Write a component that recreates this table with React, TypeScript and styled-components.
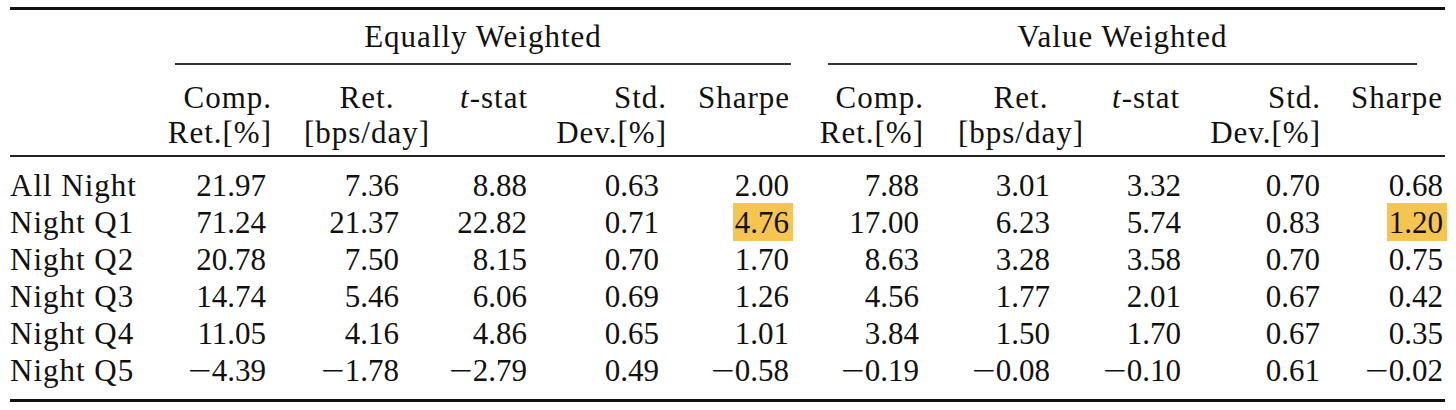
import styled, { createGlobalStyle } from 'styled-components'

const serif = '"Liberation Serif", serif'

const GlobalStyle = createGlobalStyle`
  html, body {
    margin: 0;
    padding: 0;
    background: #fff;
    font-family: ${serif};
    color: #111;
  }
`

const Table = styled.table`
  margin: 7px 0 0 10px;
  width: 1435px;
  table-layout: fixed;
  border-collapse: separate;
  border-spacing: 0;
  border-top: 3px solid #111;
  font-family: ${serif};
  font-size: 31px;
  color: #111;

  th,
  td {
    font-family: ${serif};
  }
`

const Col = styled.col<{ $w: number }>`
  width: ${(p) => p.$w}px;
`

const GroupCell = styled.th`
  padding: 8px 0 0 0;
  font-weight: normal;
  line-height: 37px;
  letter-spacing: 1px;
`

const CMid = styled.div<{ $left: number; $right: number }>`
  display: flex;
  justify-content: center;
  margin: 0 ${(p) => p.$right}px 0 ${(p) => p.$left}px;
  padding-bottom: 8px;
  border-bottom: 2px solid #333;
  white-space: nowrap;
`

const HeadCell = styled.th<{ $last?: boolean }>`
  padding: 15px ${(p) => (p.$last ? 2 : 0)}px 5px 0;
  font-weight: normal;
  line-height: 35px;
  vertical-align: top;
  border-bottom: 2px solid #222;
  letter-spacing: 1px;
`

const HeadStack = styled.div<{ $align: string; $shift: number }>`
  display: flex;
  flex-direction: column;
  align-items: ${(p) => p.$align};
  margin: 0 ${(p) => -p.$shift}px 0 ${(p) => p.$shift}px;
  white-space: nowrap;
`

const Row = styled.tr`
  &:first-child td {
    padding-top: 10px;
  }
  &:last-child td {
    padding-bottom: 10px;
    border-bottom: 3px solid #111;
  }
`

const LabelCell = styled.td`
  padding: 0;
  line-height: 37px;
  text-align: left;
  white-space: nowrap;
  letter-spacing: 1px;
`

const NumCell = styled.td<{ $last?: boolean }>`
  padding: 0 ${(p) => (p.$last ? 2 : 0)}px 0 0;
  line-height: 37px;
  text-align: right;
  white-space: nowrap;
`

const Highlight = styled.span`
  background: #f6c451;
  padding: 2px 4px 1px 2px;
  margin-right: -4px;
`

const Minus = styled.span`
  display: inline-block;
  transform: scaleX(1.35);
  transform-origin: right center;
  margin-left: 0.2em;
`

type Head = { lines: React.ReactNode[]; align: string; shift: number }

const tStat = (
  <span>
    <i>t</i>-stat
  </span>
)

const heads: Head[] = [
  { lines: ['Comp.', 'Ret.[%]'], align: 'flex-end', shift: 6 },
  { lines: ['Ret.', '[bps/day]'], align: 'center', shift: 34.5 },
  { lines: [tStat], align: 'flex-end', shift: 1 },
  { lines: ['Std.', 'Dev.[%]'], align: 'flex-end', shift: 8 },
  { lines: ['Sharpe'], align: 'flex-end', shift: 1 },
  { lines: ['Comp.', 'Ret.[%]'], align: 'flex-end', shift: 5 },
  { lines: ['Ret.', '[bps/day]'], align: 'center', shift: 36.5 },
  { lines: [tStat], align: 'flex-end', shift: -1 },
  { lines: ['Std.', 'Dev.[%]'], align: 'flex-end', shift: 1 },
  { lines: ['Sharpe'], align: 'flex-end', shift: 0 },
]

const widths = [165, 91, 133, 128, 132, 130, 130, 131, 131, 139, 125]

const rows: { label: string; values: string[] }[] = [
  { label: 'All Night', values: ['21.97', '7.36', '8.88', '0.63', '2.00', '7.88', '3.01', '3.32', '0.70', '0.68'] },
  { label: 'Night Q1', values: ['71.24', '21.37', '22.82', '0.71', '*4.76', '17.00', '6.23', '5.74', '0.83', '*1.20'] },
  { label: 'Night Q2', values: ['20.78', '7.50', '8.15', '0.70', '1.70', '8.63', '3.28', '3.58', '0.70', '0.75'] },
  { label: 'Night Q3', values: ['14.74', '5.46', '6.06', '0.69', '1.26', '4.56', '1.77', '2.01', '0.67', '0.42'] },
  { label: 'Night Q4', values: ['11.05', '4.16', '4.86', '0.65', '1.01', '3.84', '1.50', '1.70', '0.67', '0.35'] },
  { label: 'Night Q5', values: ['-4.39', '-1.78', '-2.79', '0.49', '-0.58', '-0.19', '-0.08', '-0.10', '0.61', '-0.02'] },
]

function Value({ v }: { v: string }) {
  const marked = v.startsWith('*')
  const raw = marked ? v.slice(1) : v
  const text = raw.startsWith('-') ? (
    <>
      <Minus>−</Minus>
      {raw.slice(1)}
    </>
  ) : (
    raw
  )
  return marked ? <Highlight>{text}</Highlight> : <>{text}</>
}

export default function App() {
  return (
    <>
      <GlobalStyle />
      <Table>
        <colgroup>
          {widths.map((w, i) => (
            <Col key={i} $w={w} />
          ))}
        </colgroup>
        <thead>
          <tr>
            <GroupCell />
            <GroupCell colSpan={5}>
              <CMid $left={0} $right={-2}>Equally Weighted</CMid>
            </GroupCell>
            <GroupCell colSpan={5}>
              <CMid $left={39} $right={28}>Value Weighted</CMid>
            </GroupCell>
          </tr>
          <tr>
            <HeadCell />
            {heads.map((h, i) => (
              <HeadCell key={i} $last={i === heads.length - 1}>
                <HeadStack $align={h.align} $shift={h.shift}>
                  {h.lines.map((l, j) => (
                    <div key={j}>{l}</div>
                  ))}
                </HeadStack>
              </HeadCell>
            ))}
          </tr>
        </thead>
        <tbody>
          {rows.map((r) => (
            <Row key={r.label}>
              <LabelCell>{r.label}</LabelCell>
              {r.values.map((v, i) => (
                <NumCell key={i} $last={i === r.values.length - 1}>
                  <Value v={v} />
                </NumCell>
              ))}
            </Row>
          ))}
        </tbody>
      </Table>
    </>
  )
}
